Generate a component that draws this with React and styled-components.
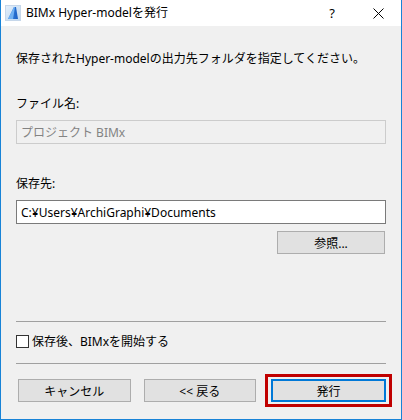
import React from "react";
import styled, { createGlobalStyle } from "styled-components";

const GlobalStyle = createGlobalStyle`
    html, body {
        margin: 0;
        padding: 0;
        background: #ffffff;
    }
    body {
        font-family: "Noto Sans", "Noto Sans CJK JP", sans-serif;
        font-size: 12px;
        color: #000000;
    }
`

const AppIcon = () => (
    <svg width="16" height="16" viewBox="0 0 16 16">
        <defs>
            <linearGradient id="bg" x1="0" y1="0" x2="1" y2="1">
                <stop offset="0" stopColor="#e4effb" />
                <stop offset="1" stopColor="#bcd6f0" />
            </linearGradient>
            <linearGradient id="sail" x1="0" y1="0" x2="1" y2="0">
                <stop offset="0" stopColor="#3a8be6" />
                <stop offset="1" stopColor="#1b5fc4" />
            </linearGradient>
        </defs>
        <rect x="0.5" y="0.5" width="15" height="15" fill="url(#bg)" stroke="#c6d7ea" />
        <path d="M3 14 L9 2 L11 2 L13 14 Z" fill="url(#sail)" />
        <path d="M9 2 L10 2 L8 14 L3 14 Z" fill="#6fb0f3" />
    </svg>
)

const App = () => {
    return (
        <>
            <GlobalStyle />
            <Window>
                <TitleBar>
                    <IconSlot><AppIcon /></IconSlot>
                    <TitleText>BIMx Hyper-modelを発行</TitleText>
                    <HelpButton>?</HelpButton>
                    <CloseButton>
                        <svg width="11" height="11" viewBox="0 0 11 11">
                            <path d="M0.5 0.5 L10.5 10.5 M10.5 0.5 L0.5 10.5" stroke="#000" strokeWidth="1" />
                        </svg>
                    </CloseButton>
                </TitleBar>
                <Body>
                    <Instruction>保存されたHyper-modelの出力先フォルダを指定してください。</Instruction>

                    <FieldLabel mt={"29px"}>ファイル名:</FieldLabel>
                    <TextField disabled readOnly value="プロジェクト BIMx" />

                    <FieldLabel mt={"32px"}>保存先:</FieldLabel>
                    <TextField readOnly value="C:¥Users¥ArchiGraphi¥Documents" />
                    <BrowseRow>
                        <PushButton width={"108px"}>参照...</PushButton>
                    </BrowseRow>

                    <Separator mt={"67px"} />
                    <CheckRow>
                        <CheckBox />
                        <CheckLabel>保存後、BIMxを開始する</CheckLabel>
                    </CheckRow>
                    <Separator mt={"15px"} />

                    <ButtonRow>
                        <PushButton width={"114px"}>キャンセル</PushButton>
                        <PushButton width={"114px"}>&lt;&lt; 戻る</PushButton>
                        <Highlighted>
                            <PushButton width={"115px"} focused>発行</PushButton>
                            <RedMark />
                        </Highlighted>
                    </ButtonRow>
                </Body>
            </Window>
        </>
    );
}

const Window = styled.div`
    display: flex;
    flex-direction: column;
    width: 402px;
    height: 420px;
    box-sizing: border-box;
    border: 1px solid #1883d7;
    border-top: none;
    background: #f0f0f0;
`
const TitleBar = styled.div`
    display: flex;
    align-items: center;
    height: 26px;
    background: #ffffff;
    flex-shrink: 0;
`
const IconSlot = styled.div`
    display: flex;
    width: 16px;
    height: 16px;
    margin-left: 4px;
    margin-right: 5px;
`
const TitleText = styled.div`
    flex: 1;
    font-size: 12px;
    line-height: 16px;
    color: #000;
`
const HelpButton = styled.div`
    width: 46px;
    text-align: center;
    font-size: 13px;
`
const CloseButton = styled.div`
    display: flex;
    justify-content: center;
    align-items: center;
    width: 46px;
    height: 26px;
`
const Body = styled.div`
    display: flex;
    flex-direction: column;
    padding: 0 15px;
`
const Instruction = styled.div`
    margin-top: 25px;
    line-height: 16px;
`
const FieldLabel = styled.div`
    margin-top: ${p => p.mt || "0px"};
    line-height: 16px;
    margin-bottom: 8px;
`
const TextField = styled.input`
    display: block;
    box-sizing: border-box;
    width: 370px;
    height: 24px;
    margin: 0;
    padding: 0 4px;
    font-family: "Noto Sans", "Noto Sans CJK JP", sans-serif;
    font-size: 12px;
    color: #000;
    background: #ffffff;
    border: 1px solid #7a7a7a;
    outline: none;
    &:disabled {
        background: #f0f0f0;
        border-color: #cccccc;
        color: #838383;
    }
`
const BrowseRow = styled.div`
    display: flex;
    justify-content: flex-end;
    margin-top: 7px;
    padding-right: 1px;
`
const PushButton = styled.div`
    display: flex;
    justify-content: center;
    align-items: center;
    box-sizing: border-box;
    width: ${p => p.width};
    height: 23px;
    background: #e1e1e1;
    border: ${p => p.focused ? "2px solid #0078d7" : "1px solid #adadad"};
    font-size: 12px;
    color: #000;
`
const Separator = styled.div`
    height: 1px;
    margin-top: ${p => p.mt || "0px"};
    background: #a0a0a0;
    width: 370px;
`
const CheckRow = styled.div`
    display: flex;
    align-items: center;
    margin-top: 13px;
    height: 13px;
`
const CheckBox = styled.div`
    box-sizing: border-box;
    width: 13px;
    height: 13px;
    border: 1px solid #333333;
    background: #ffffff;
    margin-right: 3px;
`
const CheckLabel = styled.div`
    line-height: 16px;
`
const ButtonRow = styled.div`
    display: flex;
    align-items: center;
    gap: 13px;
    margin-top: 15px;
    padding-left: 2px;
`
const Highlighted = styled.div`
    position: relative;
    margin-left: 2px;
`
const RedMark = styled.div`
    position: absolute;
    top: -5px;
    left: -6px;
    right: -6px;
    bottom: -5px;
    border: 3px solid #c00000;
    pointer-events: none;
`

export default App;
